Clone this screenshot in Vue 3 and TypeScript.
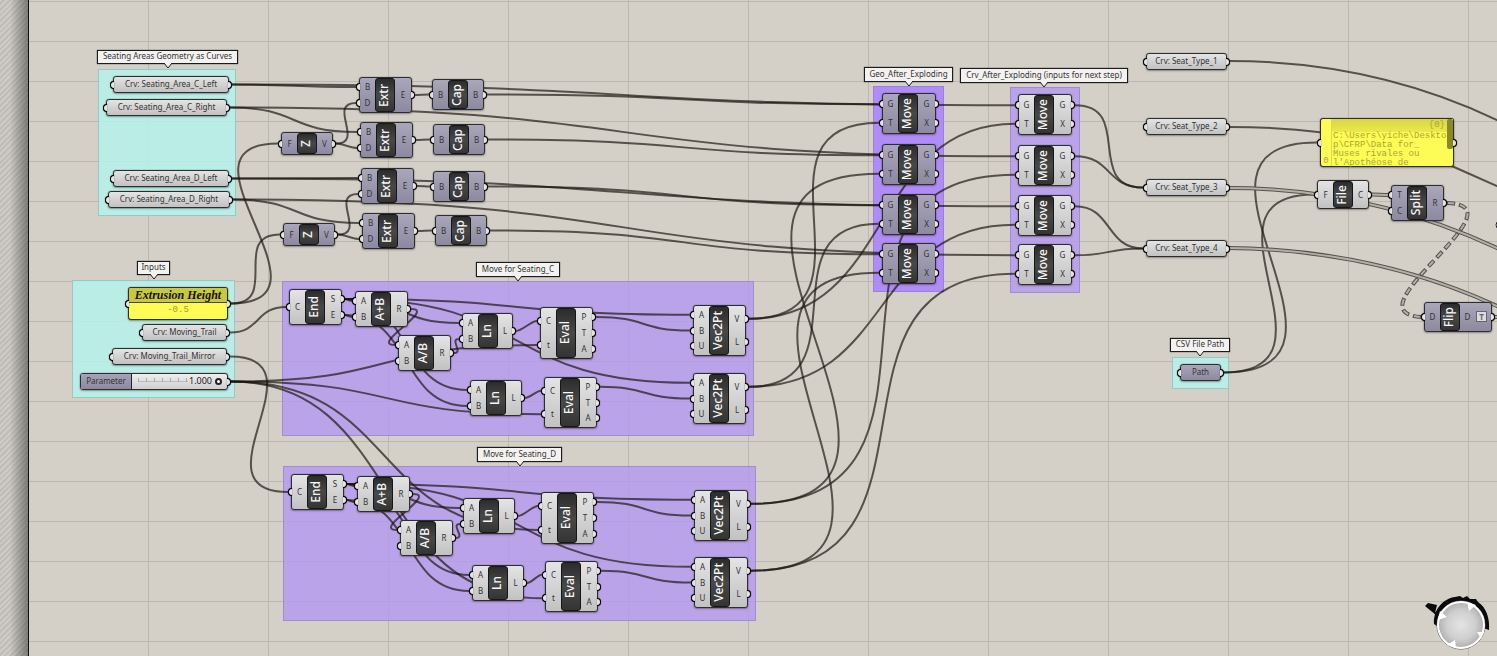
<script setup lang="ts">
import { ref } from 'vue'

type Tone = 'light' | 'dusk'

interface Box {
  x: number
  y: number
  w: number
  h: number
}

interface Component extends Box {
  id: string
  name: string
  tone: Tone
  ins: string[]
  outs: string[]
  badge?: string
}

interface Param extends Box {
  id: string
  text: string
  tone: Tone
}

interface Group extends Box {
  color: 'aqua' | 'lilac' | 'violet'
}

interface Tag extends Box {
  text: string
}

type Point = [number, number]

const groups: Group[] = [
  { x: 98, y: 69, w: 138, h: 147, color: 'aqua' },
  { x: 72, y: 280, w: 163, h: 118, color: 'aqua' },
  { x: 1172, y: 357, w: 57, h: 32, color: 'aqua' },
  { x: 282, y: 281, w: 472, h: 155, color: 'lilac' },
  { x: 283, y: 466, w: 473, h: 155, color: 'lilac' },
  { x: 873, y: 86, w: 71, h: 206, color: 'violet' },
  { x: 1010, y: 87, w: 70, h: 206, color: 'lilac' },
]

const tags: Tag[] = [
  { x: 97, y: 50, w: 141, h: 14, text: 'Seating Areas Geometry as Curves' },
  { x: 137, y: 261, w: 33, h: 14, text: 'Inputs' },
  { x: 476, y: 262, w: 84, h: 15, text: 'Move for Seating_C' },
  { x: 477, y: 447, w: 85, h: 15, text: 'Move for Seating_D' },
  { x: 864, y: 67, w: 89, h: 15, text: 'Geo_After_Exploding' },
  { x: 960, y: 68, w: 168, h: 15, text: 'Crv_After_Exploding (inputs for next step)' },
  { x: 1170, y: 338, w: 60, h: 14, text: 'CSV File Path' },
]

const params: Param[] = [
  { id: 'cLeft', x: 113, y: 76, w: 116, h: 17, text: 'Crv: Seating_Area_C_Left', tone: 'light' },
  { id: 'cRight', x: 106, y: 99, w: 121, h: 17, text: 'Crv: Seating_Area_C_Right', tone: 'light' },
  { id: 'dLeft', x: 113, y: 170, w: 116, h: 17, text: 'Crv: Seating_Area_D_Left', tone: 'light' },
  { id: 'dRight', x: 108, y: 191, w: 122, h: 17, text: 'Crv: Seating_Area_D_Right', tone: 'light' },
  { id: 'trail', x: 142, y: 324, w: 85, h: 17, text: 'Crv: Moving_Trail', tone: 'light' },
  { id: 'mirror', x: 112, y: 348, w: 115, h: 17, text: 'Crv: Moving_Trail_Mirror', tone: 'light' },
  { id: 'seat1', x: 1146, y: 53, w: 81, h: 17, text: 'Crv: Seat_Type_1', tone: 'light' },
  { id: 'seat2', x: 1146, y: 118, w: 81, h: 17, text: 'Crv: Seat_Type_2', tone: 'light' },
  { id: 'seat3', x: 1146, y: 179, w: 81, h: 17, text: 'Crv: Seat_Type_3', tone: 'light' },
  { id: 'seat4', x: 1146, y: 240, w: 81, h: 17, text: 'Crv: Seat_Type_4', tone: 'light' },
  { id: 'path', x: 1180, y: 364, w: 41, h: 17, text: 'Path', tone: 'dusk' },
]

function comp(
  id: string, name: string, x: number, y: number, w: number, h: number,
  ins: string, outs: string, tone: Tone = 'light', badge?: string,
): Component {
  return { id, name, x, y, w, h, ins: ins.split(''), outs: outs.split(''), tone, badge }
}

const components: Component[] = [
  comp('z1', 'Z', 281, 132, 52, 23, 'F', 'V', 'dusk'),
  comp('z2', 'Z', 283, 223, 52, 23, 'F', 'V', 'dusk'),
  comp('extr1', 'Extr', 359, 77, 53, 36, 'BD', 'E', 'dusk'),
  comp('extr2', 'Extr', 360, 122, 53, 36, 'BD', 'E', 'dusk'),
  comp('extr3', 'Extr', 361, 168, 53, 36, 'BD', 'E', 'dusk'),
  comp('extr4', 'Extr', 362, 213, 53, 36, 'BD', 'E', 'dusk'),
  comp('cap1', 'Cap', 432, 79, 52, 31, 'B', 'B', 'dusk'),
  comp('cap2', 'Cap', 433, 124, 52, 31, 'B', 'B', 'dusk'),
  comp('cap3', 'Cap', 433, 171, 52, 31, 'B', 'B', 'dusk'),
  comp('cap4', 'Cap', 435, 215, 52, 31, 'B', 'B', 'dusk'),
  comp('endC', 'End', 289, 289, 53, 36, 'C', 'SE'),
  comp('addC', 'A+B', 355, 291, 53, 36, 'AB', 'R'),
  comp('divC', 'A/B', 398, 335, 53, 36, 'AB', 'R'),
  comp('ln1C', 'Ln', 462, 313, 51, 36, 'AB', 'L'),
  comp('ln2C', 'Ln', 470, 380, 52, 36, 'AB', 'L'),
  comp('ev1C', 'Eval', 540, 307, 53, 52, 'Ct', 'PTA'),
  comp('ev2C', 'Eval', 544, 377, 53, 51, 'Ct', 'PTA'),
  comp('vec1C', 'Vec2Pt', 693, 305, 53, 51, 'ABU', 'VL'),
  comp('vec2C', 'Vec2Pt', 693, 373, 53, 51, 'ABU', 'VL'),
  comp('endD', 'End', 291, 474, 53, 36, 'C', 'SE'),
  comp('addD', 'A+B', 357, 476, 53, 36, 'AB', 'R'),
  comp('divD', 'A/B', 400, 520, 53, 36, 'AB', 'R'),
  comp('ln1D', 'Ln', 463, 498, 52, 36, 'AB', 'L'),
  comp('ln2D', 'Ln', 472, 565, 52, 36, 'AB', 'L'),
  comp('ev1D', 'Eval', 541, 492, 53, 52, 'Ct', 'PTA'),
  comp('ev2D', 'Eval', 545, 561, 53, 51, 'Ct', 'PTA'),
  comp('vec1D', 'Vec2Pt', 694, 490, 54, 51, 'ABU', 'VL'),
  comp('vec2D', 'Vec2Pt', 694, 557, 54, 51, 'ABU', 'VL'),
  comp('geo1', 'Move', 882, 93, 54, 41, 'GT', 'GX', 'dusk'),
  comp('geo2', 'Move', 882, 144, 54, 41, 'GT', 'GX', 'dusk'),
  comp('geo3', 'Move', 882, 194, 54, 41, 'GT', 'GX', 'dusk'),
  comp('geo4', 'Move', 882, 243, 54, 41, 'GT', 'GX', 'dusk'),
  comp('crv1', 'Move', 1018, 94, 54, 41, 'GT', 'GX'),
  comp('crv2', 'Move', 1018, 145, 54, 41, 'GT', 'GX'),
  comp('crv3', 'Move', 1018, 195, 54, 41, 'GT', 'GX'),
  comp('crv4', 'Move', 1018, 244, 54, 41, 'GT', 'GX'),
  comp('file', 'File', 1317, 180, 52, 29, 'F', 'C'),
  comp('split', 'Split', 1391, 185, 53, 36, 'TC', 'R', 'dusk'),
  comp('flip', 'Flip', 1424, 302, 68, 30, 'D', 'D', 'dusk', 'T'),
]

const heightPanel: Box = { x: 128, y: 287, w: 100, h: 33 }
const slider: Box = { x: 80, y: 373, w: 148, h: 17 }
const textPanel: Box = { x: 1320, y: 118, w: 134, h: 49 }
const sliderValue = ref(1)
const sliderText = (v: number) => Number(v).toFixed(3)

/* Single-port items are addressed by id alone, components as "id.port". */
const single = new Map<string, Box>([
  ...params.map((p): [string, Box] => [p.id, p]),
  ['height', heightPanel],
  ['slider', slider],
  ['text', textPanel],
])
const byId = new Map(components.map((c): [string, Component] => [c.id, c]))

function port(key: string, side: 'in' | 'out'): Point {
  const [id, name] = key.split('.')
  const box = single.get(id) ?? byId.get(id)!
  const x = side === 'in' ? box.x - 3 : box.x + box.w + 3
  const c = byId.get(id)
  if (!c) return [x, box.y + box.h / 2]
  const list = side === 'in' ? c.ins : c.outs
  const i = list.indexOf(name)
  return [x, c.y + 2 + ((c.h - 4) * (i + 0.5)) / list.length]
}

function wire(from: string, to: string): string {
  const [x1, y1] = port(from, 'out')
  const [x2, y2] = port(to, 'in')
  const dx = Math.abs(x2 - x1)
  const dy = Math.abs(y2 - y1)
  const k = dx < 30 && dy < dx ? dx * 0.3 : Math.max(dx * 0.55, dy * 0.72)
  return `M${x1} ${y1}C${x1 + k} ${y1} ${x2 - k} ${y2} ${x2} ${y2}`
}

const links = `
cLeft extr1.B|cLeft crv1.G|cRight extr2.B|cRight crv2.G
dLeft extr3.B|dLeft crv3.G|dRight extr4.B|dRight crv4.G
height z1.F|height z2.F|z1.V extr1.D|z1.V extr2.D|z2.V extr3.D|z2.V extr4.D
extr1.E cap1.B|extr2.E cap2.B|extr3.E cap3.B|extr4.E cap4.B
cap1.B geo1.G|cap2.B geo2.G|cap3.B geo3.G|cap4.B geo4.G
trail endC.C|mirror endD.C
slider ev1C.t|slider ev2C.t|slider ev1D.t|slider ev2D.t
vec1C.V geo1.T|vec1D.V geo2.T|vec2C.V geo3.T|vec2D.V geo4.T
vec1C.V crv1.T|vec1D.V crv2.T|vec2C.V crv3.T|vec2D.V crv4.T
crv1.G seat3|crv2.G seat3|crv3.G seat4|crv4.G seat4
path file.F|path text
`
const perSide = ['C', 'D'].flatMap((s) =>
  `end.S add.A|end.S ln1.A|end.S ln2.A|end.S vec1.A|end.S vec2.A|end.E add.B|end.E ln2.B|add.R div.A|div.R ln1.B|ln1.L ev1.C|ln2.L ev2.C|ev1.P vec1.B|ev2.P vec2.B`
    .split('|')
    .map((l) => l.replace(/(\w+)\./g, `$1${s}.`)),
)
const wires = [...links.split(/[|\n]/).filter(Boolean), ...perSide].map((l) => {
  const [a, b] = l.trim().split(' ')
  return wire(a, b)
})

/* Wires whose far end lies beyond the visible canvas. */
const outgoing = [
  'M1229 61C1319 61 1407 77 1497 120L1700 220',
  'M1229 127C1310 127 1390 139 1454 167L1497 186L1700 280',
]
const listWires = [
  'M1229 188C1320 188 1410 208 1497 248L1700 350',
  'M1229 248C1320 249 1410 266 1497 306L1700 410',
  wire('file.C', 'split.T'),
  'M1495 317L1700 317',
]
const treeWire = 'M1447 203C1526 205 1346 312 1421 317'

const place = (b: Box) => ({
  left: b.x + 'px',
  top: b.y + 'px',
  width: b.w + 'px',
  height: b.h + 'px',
})
</script>

<template>
  <main class="canvas">
    <div class="margin"></div>

    <div v-for="(g, i) in groups" :key="'g' + i" class="group" :class="g.color" :style="place(g)"></div>

    <svg class="wires" aria-hidden="true">
      <path v-for="(d, i) in wires" :key="i" :d="d" class="wire" />
      <path v-for="d in outgoing" :key="d" :d="d" class="wire" />
      <template v-for="d in listWires" :key="d">
        <path :d="d" class="list-outer" />
        <path :d="d" class="list-inner" />
      </template>
      <path :d="treeWire" class="tree-outer" />
      <path :d="treeWire" class="tree-inner" />
      <circle cx="1500" cy="225" r="4" class="far-port" />
    </svg>

    <div v-for="t in tags" :key="t.text" class="tag" :style="place(t)">
      <span>{{ t.text }}</span>
      <svg class="pointer" width="10" height="6" viewBox="0 0 10 6" aria-hidden="true">
        <path d="M1 0L5 5L9 0" />
      </svg>
    </div>

    <div v-for="p in params" :key="p.id" class="node param" :class="p.tone" :style="place(p)">
      <i class="grip left"></i>
      <span>{{ p.text }}</span>
      <i class="grip right"></i>
    </div>

    <section
      v-for="c in components"
      :key="c.id"
      class="node component"
      :class="[c.tone, { badged: c.badge }]"
      :style="place(c)"
    >
      <ul class="ports ins">
        <li v-for="n in c.ins" :key="n"><i class="grip left"></i>{{ n }}</li>
      </ul>
      <div class="bar"><span>{{ c.name }}</span></div>
      <ul class="ports outs">
        <li v-for="n in c.outs" :key="n">{{ n }}<i class="grip right"></i></li>
      </ul>
      <b v-if="c.badge" class="badge">{{ c.badge }}</b>
    </section>

    <section class="node height-panel" :style="place(heightPanel)">
      <i class="grip left"></i>
      <h2>Extrusion Height</h2>
      <p>-0.5</p>
      <i class="grip right"></i>
    </section>

    <div class="node slider" :style="place(slider)">
      <label for="parameter">Parameter</label>
      <div class="track">
        <input id="parameter" v-model="sliderValue" type="range" min="0" max="1" step="0.001" />
        <output for="parameter">{{ sliderText(sliderValue) }}</output>
      </div>
      <i class="grip right"></i>
    </div>

    <section class="node text-panel" :style="place(textPanel)">
      <i class="grip left"></i>
      <div class="gutter">0</div>
      <div class="page">
        <header>{0}</header>
        <p>C:\Users\yiche\Deskto<br />p\CFRP\Data for_<br />Muses rivales ou<br />l'Apothéose de</p>
      </div>
      <div class="thumb"></div>
      <i class="grip right"></i>
    </section>

    <svg class="compass" width="72" height="62" viewBox="0 0 72 62" aria-hidden="true">
      <defs>
        <radialGradient id="dial" cx="0.5" cy="0.5" r="0.5">
          <stop offset="0" stop-color="#e4e4e4" />
          <stop offset="0.6" stop-color="#cfcfcf" />
          <stop offset="0.9" stop-color="#b4b4b4" />
          <stop offset="1" stop-color="#dedede" />
        </radialGradient>
      </defs>
      <path d="M11 30C10 14 22 4 32 3L37 2L40 4L44 2L47 5L53 5L55 8C63 13 67 24 66 36L60 34L14 32Z" fill="#0a0a0a" />
      <path d="M2 12L5 9L14 11L12 19L8 17Z" fill="#0a0a0a" />
      <path d="M9 16L13 20" stroke="#0a0a0a" stroke-width="2" />
      <circle cx="38" cy="31" r="24" fill="url(#dial)" stroke="#555" stroke-width="1" />
      <circle cx="38" cy="31" r="23" fill="none" stroke="#fff" stroke-width="2" />
      <path d="M44 8L53 11L46 17Z M15 26L17 17L24 23Z M61 38L58 45L54 38Z M24 51L32 46L33 54Z" fill="#fff" />
    </svg>
  </main>
</template>

<style>
body {
  margin: 0;
}
</style>

<style scoped>
.canvas {
  position: relative;
  min-height: 100vh;
  overflow: hidden;
  box-sizing: border-box;
  background-color: #d4d0c8;
  background-image:
    linear-gradient(90deg, #bcb8b0 1px, transparent 1px),
    linear-gradient(#bcb8b0 1px, transparent 1px);
  background-size: 120px 40px;
  background-position: 28px 1px;
  color: #333;
  font-family: 'Noto Sans', 'Open Sans', sans-serif;
  font-size: 8px;
  line-height: 12px;
}

.margin {
  position: absolute;
  inset: 0 auto 0 0;
  width: 28px;
  border-right: 1px solid #111;
  background:
    linear-gradient(90deg, transparent 10px, rgba(50, 50, 48, 0.5)),
    repeating-linear-gradient(135deg, #cdcbc4 0 2px, #bfbdb6 2px 4px);
}

.group {
  position: absolute;
  box-sizing: border-box;
  border: 1px solid;
}

.aqua {
  background: rgba(180, 242, 234, 0.85);
  border-color: #98c8c2;
}

.lilac {
  background: rgba(181, 152, 240, 0.82);
  border-color: #a18cd0;
}

.violet {
  background: rgba(172, 132, 252, 0.9);
  border-color: #9a7ee0;
}

.wires {
  position: absolute;
  inset: 0;
  width: 100%;
  height: 100%;
}

.wires path {
  fill: none;
}

.wire {
  stroke: rgba(25, 20, 15, 0.68);
  stroke-width: 2;
}

.list-outer {
  stroke: #56534e;
  stroke-width: 4;
}

.list-inner {
  stroke: #b4b0a8;
  stroke-width: 2;
}

.tree-outer {
  stroke: #55524e;
  stroke-width: 4;
  stroke-dasharray: 8 4;
}

.tree-inner {
  stroke: #b4b0a8;
  stroke-width: 2;
  stroke-dasharray: 6 6;
  stroke-dashoffset: -1;
}

.far-port {
  fill: #eee;
  stroke: #222;
}

.tag {
  position: absolute;
  box-sizing: border-box;
  display: flex;
  align-items: center;
  justify-content: center;
  padding-bottom: 2px;
  border: 1px solid #1c1c1c;
  background: #f3f2f0;
  box-shadow: 0 0 1px #222;
  color: #333;
  white-space: nowrap;
}

.pointer {
  position: absolute;
  top: 100%;
  left: calc(50% - 5px);
}

.pointer path {
  fill: #f3f2f0;
  stroke: #1c1c1c;
}

.node {
  position: absolute;
  box-sizing: border-box;
  border: 1px solid #2e2e2e;
  border-radius: 3px;
  box-shadow: 0 0 1px #333, 0 1px 2px rgba(0, 0, 0, 0.3);
}

.light {
  background: linear-gradient(#e4e4e4, #c2c2c2);
}

.dusk {
  background: linear-gradient(#aaa7bb, #8c89a0);
}

.grip {
  position: absolute;
  top: calc(50% - 4px);
  width: 4px;
  height: 8px;
  box-sizing: border-box;
  border: 1px solid #000;
  background: #e4e4e4;
  box-shadow: 0 0 1px #000;
}

.grip.left {
  left: -4px;
  border-right: 0;
  border-radius: 4px 0 0 4px;
}

.grip.right {
  right: -4px;
  border-left: 0;
  border-radius: 0 4px 4px 0;
}

.param {
  display: flex;
  align-items: center;
  justify-content: center;
  padding-bottom: 2px;
  white-space: nowrap;
}

.component {
  display: flex;
}

.ports {
  display: flex;
  flex-direction: column;
  width: 15px;
  margin: 0;
  padding: 1px 0;
  list-style: none;
}

.ports li {
  position: relative;
  flex: 1;
  display: flex;
  align-items: center;
  justify-content: center;
  color: #333;
}

.bar {
  width: 20px;
  box-sizing: border-box;
  display: flex;
  align-items: center;
  justify-content: center;
  padding-right: 3px;
  border: 1px solid #161616;
  border-radius: 3px;
  background: linear-gradient(#2c2c2c, #484848 50%, #343434);
  color: #f6f6f6;
  font-size: 12px;
  font-weight: 500;
  line-height: 16px;
}

.bar span {
  writing-mode: vertical-rl;
  transform: rotate(180deg);
}

.ports.outs {
  flex: 1;
}

.badged .outs li {
  padding-right: 16px;
}

.badge {
  position: absolute;
  top: 50%;
  right: 4px;
  width: 9px;
  height: 9px;
  margin-top: -6px;
  border: 1px solid #666;
  background: #dcdcdc;
  color: #666;
  font-size: 8px;
  line-height: 9px;
  text-align: center;
}

.height-panel {
  background: #fdfb55;
  text-align: center;
}

.height-panel h2 {
  margin: 0;
  border-bottom: 1px solid #4c4a20;
  border-radius: 2px 2px 0 0;
  background: #c9c740;
  color: #111;
  font: italic bold 12px/14px 'Liberation Serif', serif;
}

.height-panel p {
  margin: 0;
  color: #a3a132;
  font: 9px/15px 'Liberation Mono', monospace;
}

.slider {
  display: flex;
  background: linear-gradient(#eee, #cfcfcf);
}

.slider label {
  flex: none;
  width: 50px;
  border-right: 1px solid #222;
  border-radius: 2px 0 0 2px;
  background: linear-gradient(#a5a2b8, #8c89a0);
  line-height: 14px;
  text-align: center;
}

.track {
  flex: 1;
  min-width: 0;
  display: flex;
  position: relative;
  padding-left: 6px;
}

.track input {
  flex: 1;
  min-width: 0;
  height: 15px;
  margin: 0 5px 0 0;
  appearance: none;
  background: repeating-linear-gradient(90deg, #aaa 0 1px, transparent 1px 8px) 0 4px / 50px 4px no-repeat,
    linear-gradient(#bbb, #bbb) 0 7px / 50px 1px no-repeat;
}

.track input::-webkit-slider-thumb {
  appearance: none;
  width: 7px;
  height: 7px;
  box-sizing: border-box;
  border: 2px solid #222;
  border-radius: 50%;
  background: #fff;
}

.track output {
  position: absolute;
  right: 15px;
  color: #222;
  font-size: 9px;
  line-height: 13px;
}

.text-panel {
  display: flex;
  background: #fdfb55;
  color: #aaa834;
  font: 9px/10px 'Liberation Mono', monospace;
}

.gutter {
  display: flex;
  align-items: flex-end;
  justify-content: center;
  width: 10px;
  border-right: 1px solid #dcda48;
}

.page {
  flex: 1;
  min-width: 0;
  white-space: nowrap;
}

.page header {
  padding-right: 8px;
  background: linear-gradient(#d8d645, #ebe94c);
  line-height: 13px;
  text-align: right;
}

.page p {
  margin: 0;
  padding-left: 1px;
  line-height: 9px;
}

.thumb {
  position: absolute;
  top: 0;
  right: 0;
  width: 6px;
  height: 30px;
  border-radius: 2px;
  background: #8a8828;
}

.compass {
  position: absolute;
  right: 2px;
  bottom: 0;
}
</style>
